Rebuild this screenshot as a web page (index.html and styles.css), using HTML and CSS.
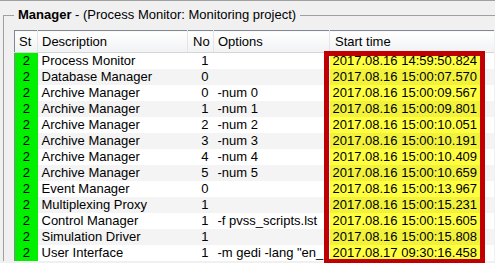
FILE: index.html
```html
<!DOCTYPE html>
<html lang="en">
  <head>
    <meta charset="UTF-8" />
    <title>Manager</title>
    <link rel="stylesheet" href="styles.css">
  </head>
  <body>
    <fieldset class="group">
      <legend><b>Manager</b> - (Process Monitor: Monitoring project)</legend>

      <div class="list-wrap">
        <table class="managers">
          <colgroup>
            <col class="c-st" />
            <col class="c-desc" />
            <col class="c-no" />
            <col class="c-opt" />
            <col class="c-time" />
            <col class="c-rest" />
          </colgroup>
          <thead>
            <tr>
              <th>St</th>
              <th>Description</th>
              <th class="no">No</th>
              <th>Options</th>
              <th class="time">Start time</th>
              <th class="rest"></th>
            </tr>
          </thead>
          <tbody>
            <tr><td class="st">2</td><td>Process Monitor</td><td class="no">1</td><td></td><td class="time">2017.08.16 14:59:50.824</td><td></td></tr>
            <tr><td class="st">2</td><td>Database Manager</td><td class="no">0</td><td></td><td class="time">2017.08.16 15:00:07.570</td><td></td></tr>
            <tr><td class="st">2</td><td>Archive Manager</td><td class="no">0</td><td>-num 0</td><td class="time">2017.08.16 15:00:09.567</td><td></td></tr>
            <tr><td class="st">2</td><td>Archive Manager</td><td class="no">1</td><td>-num 1</td><td class="time">2017.08.16 15:00:09.801</td><td></td></tr>
            <tr><td class="st">2</td><td>Archive Manager</td><td class="no">2</td><td>-num 2</td><td class="time">2017.08.16 15:00:10.051</td><td></td></tr>
            <tr><td class="st">2</td><td>Archive Manager</td><td class="no">3</td><td>-num 3</td><td class="time">2017.08.16 15:00:10.191</td><td></td></tr>
            <tr><td class="st">2</td><td>Archive Manager</td><td class="no">4</td><td>-num 4</td><td class="time">2017.08.16 15:00:10.409</td><td></td></tr>
            <tr><td class="st">2</td><td>Archive Manager</td><td class="no">5</td><td>-num 5</td><td class="time">2017.08.16 15:00:10.659</td><td></td></tr>
            <tr><td class="st">2</td><td>Event Manager</td><td class="no">0</td><td></td><td class="time">2017.08.16 15:00:13.967</td><td></td></tr>
            <tr><td class="st">2</td><td>Multiplexing Proxy</td><td class="no">1</td><td></td><td class="time">2017.08.16 15:00:15.231</td><td></td></tr>
            <tr><td class="st">2</td><td>Control Manager</td><td class="no">1</td><td>-f pvss_scripts.lst</td><td class="time">2017.08.16 15:00:15.605</td><td></td></tr>
            <tr><td class="st">2</td><td>Simulation Driver</td><td class="no">1</td><td></td><td class="time">2017.08.16 15:00:15.808</td><td></td></tr>
            <tr><td class="st">2</td><td>User Interface</td><td class="no">1</td><td class="clip">-m gedi -lang "en_</td><td class="time">2017.08.17 09:30:16.458</td><td></td></tr>
          </tbody>
        </table>

        <!-- highlight frame round the start times -->
        <div class="highlight"></div>
      </div>
    </fieldset>
  </body>
</html>
```

FILE: styles.css
```css
body {
  margin: 0;
  height: 263px;
  overflow: hidden;
  background-color: #f0f0f0;
  border-top: 1px solid #a0a0a0;
  font-family: 'Liberation Sans', Arial, sans-serif;
  font-size: 13px;
  color: #000;
}
.group {
  margin: 6px 0 0 3px;
  padding: 7px 0 0 10px;
  border: 1px solid #a0a0a0;
  border-right: none;
  border-bottom: none;
  min-width: 0;
}
.group legend {
  padding: 0 4px;
  line-height: 16px;
  white-space: nowrap;
}
.list-wrap {
  position: relative;
  width: 480px;
}
.managers {
  table-layout: fixed;
  width: 480px;
  border-collapse: collapse;
  background-color: #fff;
  border-left: 1px solid #828790;
  border-top: 1px solid #828790;
}
.c-st { width: 23px; }
.c-desc { width: 150px; }
.c-no { width: 26px; }
.c-opt { width: 116px; }
.c-time { width: 154px; }
.c-rest { width: auto; }
.managers th {
  height: 21px;
  padding: 0 4px;
  font-weight: normal;
  text-align: left;
  background: linear-gradient(#ffffff, #f1f2f4);
  border-right: 1px solid #e5e5e5;
  border-bottom: 1px solid #d5d5d5;
  white-space: nowrap;
  overflow: hidden;
}
.managers th.no,
.managers th.time {
  padding-left: 5px;
}
.managers th.time,
.managers th.rest {
  border-right: none;
}
.managers td {
  height: 16px;
  padding: 0 4px;
  line-height: 16px;
  white-space: nowrap;
  overflow: hidden;
}
.managers td.clip {
  padding-right: 0;
}
.managers tbody tr:nth-child(even) td {
  background-color: #f4f4f4;
}
.managers td.st,
.managers tbody tr:nth-child(even) td.st {
  text-align: center;
  background-color: #00f000;
}
.managers td.no {
  text-align: right;
  padding-right: 5px;
}
.managers td.time {
  padding-left: 3px;
  background-color: #ffff40;
}
.managers tbody tr:nth-child(even) td.time {
  background-color: #f2f23c;
}
.highlight {
  position: absolute;
  left: 310px;
  top: 21px;
  width: 161px;
  height: 213px;
  box-sizing: border-box;
  border: 5px solid #c00000;
}
```
